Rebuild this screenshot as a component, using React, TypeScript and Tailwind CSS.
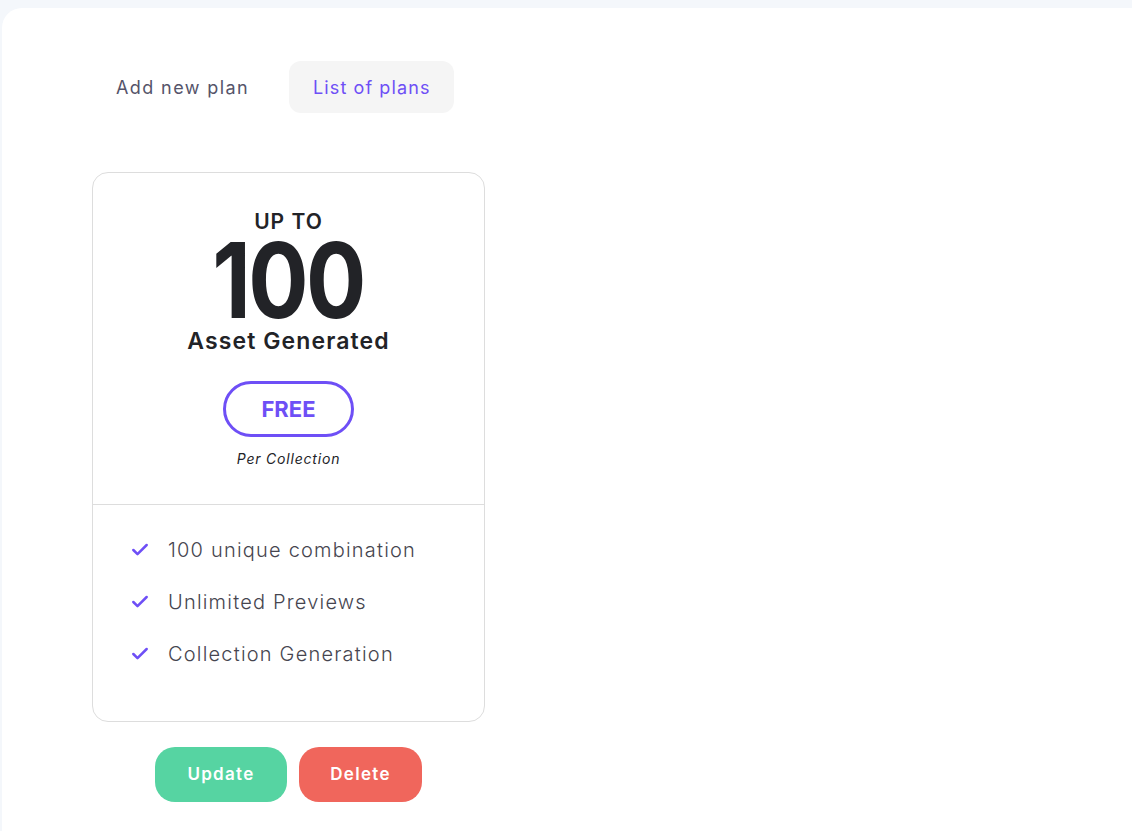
import { Check } from 'lucide-react'

const features = ['100 unique combination', 'Unlimited Previews', 'Collection Generation']

export default function App() {
  return (
    <div className="min-h-screen bg-[#f4f7fb] pt-2 pl-[2px] font-['Inter',sans-serif]">
      <div className="min-h-[823px] rounded-tl-[20px] bg-white pl-[90px] pt-[53px]">
        <div className="flex items-center gap-4">
          <button className="h-[52px] rounded-xl px-6 text-[18px] tracking-[1.4px] text-[#55546a]">Add new plan</button>
          <button className="h-[52px] rounded-xl bg-[#f5f5f5] px-6 text-[18px] tracking-[1.1px] text-[#6e4ff6]">List of plans</button>
        </div>

        <div className="mt-[59px] w-[393px]">
          <div className="rounded-2xl border border-[#dddddd]">
            <div className="flex flex-col items-center pt-[36px] pb-[36px] text-[#222327]">
              <div className="text-[21px] font-semibold leading-[26px] tracking-[1px]">UP TO</div>
              <div className="scale-x-[0.86] text-[104px] font-bold leading-[90px] tracking-[-3px]">100</div>
              <div className="mt-[1px] text-[23px] font-semibold leading-[30px] tracking-[1.1px]">Asset Generated</div>
              <div className="mt-[25px] flex h-[56px] w-[131px] items-center justify-center rounded-full border-[3px] border-[#6e4ff6] text-[22px] font-bold text-[#6e4ff6]">
                FREE
              </div>
              <div className="mt-[13px] text-[14px] italic leading-[18px] tracking-[0.8px] text-[#222327]">Per Collection</div>
            </div>
            <div className="border-t border-[#dddddd] px-[37px] pt-[33px] pb-[55px]">
              <ul className="flex flex-col gap-[28px]">
                {features.map((f) => (
                  <li key={f} className="flex items-center gap-[18px] text-[20px] font-light leading-[24px] tracking-[1.2px] text-[#46454f]">
                    <Check size={20} strokeWidth={3} className="text-[#6e4ff6]" />
                    {f}
                  </li>
                ))}
              </ul>
            </div>
          </div>

          <div className="mt-[25px] flex justify-center gap-3">
            <button className="h-[55px] w-[132px] rounded-[20px] bg-[#56d4a2] text-[17px] font-semibold tracking-[1.3px] text-white">Update</button>
            <button className="h-[55px] w-[123px] rounded-[20px] bg-[#f0665c] text-[17px] font-semibold tracking-[1.3px] text-white">Delete</button>
          </div>
        </div>
      </div>
    </div>
  )
}
